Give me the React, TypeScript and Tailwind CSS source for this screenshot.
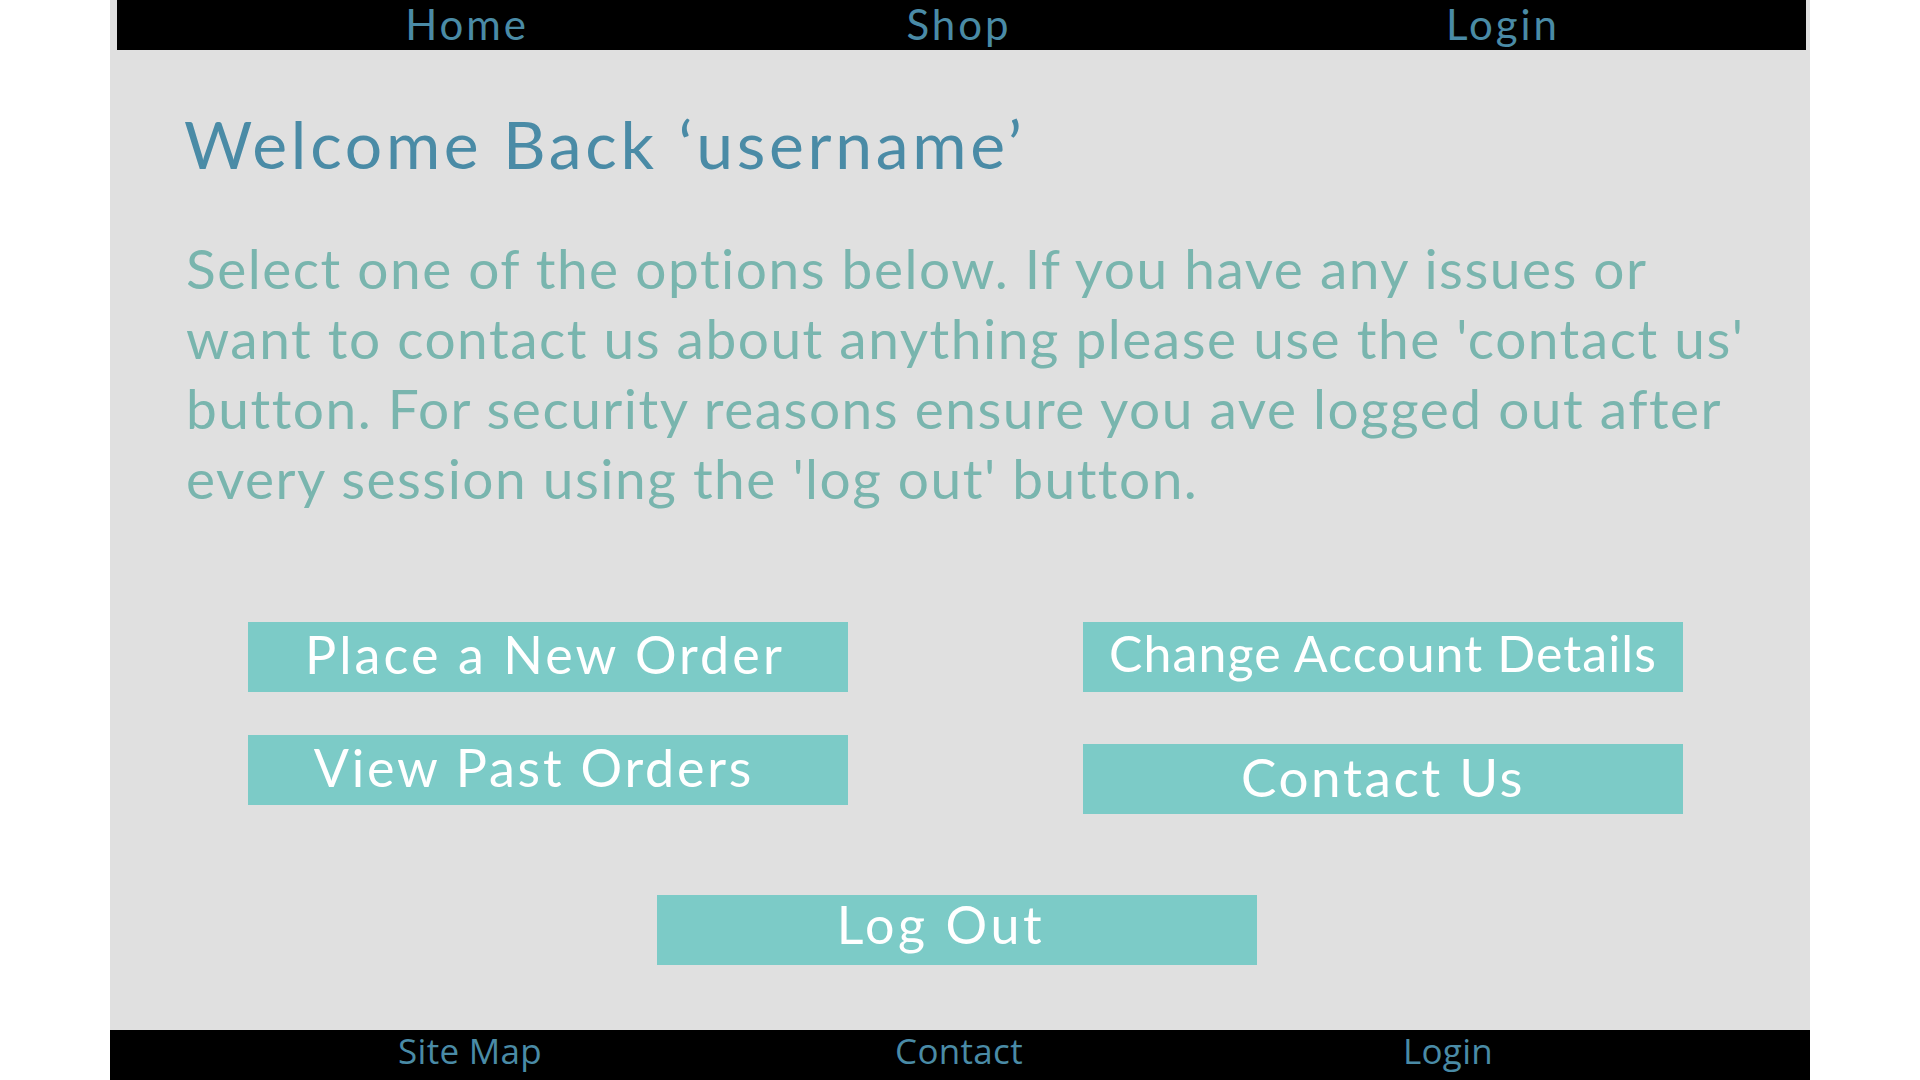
import React from "react";

export default function App() {
  return (
    <div className="relative w-[1920px] h-[1080px] bg-white overflow-hidden">
      <div className="ml-[110px] w-[1700px] h-[1080px] bg-[#e0e0e0] flex flex-col">
        <nav className="ml-[7px] mr-[4px] h-[50px] bg-black flex items-start text-[#4a8ba6] font-['Lato',sans-serif] text-[42px] leading-[48px] tracking-[0.07em]">
          <a className="ml-[250px] w-[200px] text-center">Home</a>
          <a className="ml-[292px] w-[200px] text-center">Shop</a>
          <a className="ml-[344px] w-[200px] text-center">Login</a>
        </nav>

        <main className="flex-1 flex flex-col font-['Lato',sans-serif]">
          <h1 className="mt-[54px] ml-[74px] text-[66px] leading-[80px] text-[#4a8ba6] tracking-[3.7px] whitespace-nowrap">
            Welcome Back ‘username’
          </h1>
          <p className="mt-[49px] ml-[76px] text-[55px] leading-[70px] text-[#79b5ae] tracking-[1.5px] whitespace-nowrap">
            Select one of the options below. If you have any issues or
            <br />
            want to contact us about anything please use the 'contact us'
            <br />
            button. For security reasons ensure you ave logged out after
            <br />
            every session using the 'log out' button.
          </p>

          <div className="mt-[109px] flex items-start text-white text-[52px] leading-[64px] whitespace-nowrap">
            <div className="ml-[138px] flex flex-col gap-[43px]">
              <button className="w-[600px] h-[70px] bg-[#7ccbc7] flex justify-center items-start pr-[6px] tracking-[3.1px]">
                Place a New Order
              </button>
              <button className="w-[600px] h-[70px] bg-[#7ccbc7] flex justify-center items-start pr-[28px] tracking-[2.8px]">
                View Past Orders
              </button>
            </div>
            <div className="ml-[235px] flex flex-col gap-[52px]">
              <button className="w-[600px] h-[70px] bg-[#7ccbc7] flex justify-center items-start text-[50px] leading-[62px] tracking-[1.1px]">
                Change Account Details
              </button>
              <button className="w-[600px] h-[70px] bg-[#7ccbc7] flex justify-center items-start text-[53px] leading-[66px] tracking-[2.6px]">
                Contact Us
              </button>
            </div>
          </div>

          <div className="mt-[81px] ml-[547px] text-white text-[52px] leading-[58px] tracking-[3.6px] whitespace-nowrap">
            <button className="w-[600px] h-[70px] bg-[#7ccbc7] flex justify-center items-start pr-[32px]">
              Log Out
            </button>
          </div>
        </main>

        <footer className="h-[50px] bg-black flex items-start text-[#4a8ba6] font-['Open_Sans',sans-serif] text-[35px] leading-[42px] tracking-[0.3px]">
          <a className="ml-[260px] w-[200px] text-center">Site Map</a>
          <a className="ml-[289px] w-[200px] text-center">Contact</a>
          <a className="ml-[289px] w-[200px] text-center">Login</a>
        </footer>
      </div>
    </div>
  );
}
